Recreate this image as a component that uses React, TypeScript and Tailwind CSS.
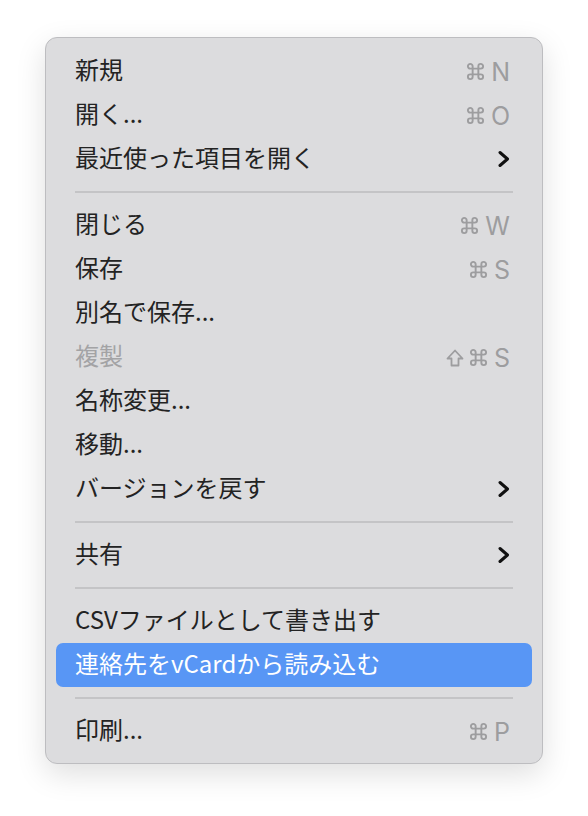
import React from 'react';

type Item =
  | { kind: 'sep' }
  | { kind: 'item'; label: string; keys?: string[]; submenu?: boolean; disabled?: boolean; active?: boolean };

const items: Item[] = [
  { kind: 'item', label: '新規', keys: ['cmd', 'N'] },
  { kind: 'item', label: '開く...', keys: ['cmd', 'O'] },
  { kind: 'item', label: '最近使った項目を開く', submenu: true },
  { kind: 'sep' },
  { kind: 'item', label: '閉じる', keys: ['cmd', 'W'] },
  { kind: 'item', label: '保存', keys: ['cmd', 'S'] },
  { kind: 'item', label: '別名で保存...' },
  { kind: 'item', label: '複製', keys: ['shift', 'cmd', 'S'], disabled: true },
  { kind: 'item', label: '名称変更...' },
  { kind: 'item', label: '移動...' },
  { kind: 'item', label: 'バージョンを戻す', submenu: true },
  { kind: 'sep' },
  { kind: 'item', label: '共有', submenu: true },
  { kind: 'sep' },
  { kind: 'item', label: 'CSVファイルとして書き出す' },
  { kind: 'item', label: '連絡先をvCardから読み込む', active: true },
  { kind: 'sep' },
  { kind: 'item', label: '印刷...', keys: ['cmd', 'P'] },
];

function Chevron() {
  return (
    <svg width="12" height="18" viewBox="0 0 12 18" fill="none">
      <path d="M2 2.5 L9.5 9 L2 15.5" stroke="#111" strokeWidth="3" strokeLinecap="round" strokeLinejoin="round" />
    </svg>
  );
}

// ⌘ glyph
function CmdKey() {
  return (
    <svg width="19" height="19" viewBox="0 0 20 20" fill="none" stroke="#9d9d9f" strokeWidth="2">
      <path d="M7 7 H13 V13 H7 Z" />
      <path d="M7 7 V4.5 A2.5 2.5 0 1 0 4.5 7 H7" />
      <path d="M13 7 V4.5 A2.5 2.5 0 1 1 15.5 7 H13" />
      <path d="M7 13 V15.5 A2.5 2.5 0 1 1 4.5 13 H7" />
      <path d="M13 13 V15.5 A2.5 2.5 0 1 0 15.5 13 H13" />
    </svg>
  );
}

// ⇧ glyph
function ShiftKey() {
  return (
    <svg width="18" height="18" viewBox="0 0 18 18" fill="none" stroke="#9d9d9f" strokeWidth="1.8" strokeLinejoin="round">
      <path d="M9 1.5 L16.5 9.5 H12.5 V16.5 H5.5 V9.5 H1.5 Z" />
    </svg>
  );
}

export default function App() {
  return (
    <div className="w-[588px] h-[816px] bg-white pt-[37px] pl-[45px] font-['Inter','Noto_Sans_CJK_JP',sans-serif]">
      <div className="w-[498px] rounded-[12px] border border-[#bdbdc0] bg-[#dcdcde] px-[10px] pt-[11px] pb-[10px] shadow-[0_10px_30px_rgba(0,0,0,0.13)]">
        {items.map((it, i) =>
          it.kind === 'sep' ? (
            <div key={i} className="h-[22px] flex items-center mx-[19px]">
              <div className="h-[2px] w-full bg-[#c4c4c6]" />
            </div>
          ) : (
            <div
              key={i}
              className={
                'h-[44px] flex items-center justify-between pl-[19px] pr-[22px] rounded-[7px] text-[24px] ' +
                (it.active ? 'bg-[#5896f5] text-white' : it.disabled ? 'text-[#a3a3a5]' : 'text-[#232323]')
              }
            >
              <span className="font-['Noto_Sans_CJK_JP',sans-serif] leading-none pb-[4px]">{it.label}</span>
              {it.keys && (
                <span className="flex items-center text-[#9d9d9f] text-[25px] leading-none pt-[3px]">
                  {it.keys.map((k, j) =>
                    k === 'cmd' ? (
                      <span key={j} className="mr-[6px] -mt-[2px]"><CmdKey /></span>
                    ) : k === 'shift' ? (
                      <span key={j} className="mr-[5px] -mt-[2px]"><ShiftKey /></span>
                    ) : (
                      <span key={j}>{k}</span>
                    )
                  )}
                </span>
              )}
              {it.submenu && <Chevron />}
            </div>
          )
        )}
      </div>
    </div>
  );
}
